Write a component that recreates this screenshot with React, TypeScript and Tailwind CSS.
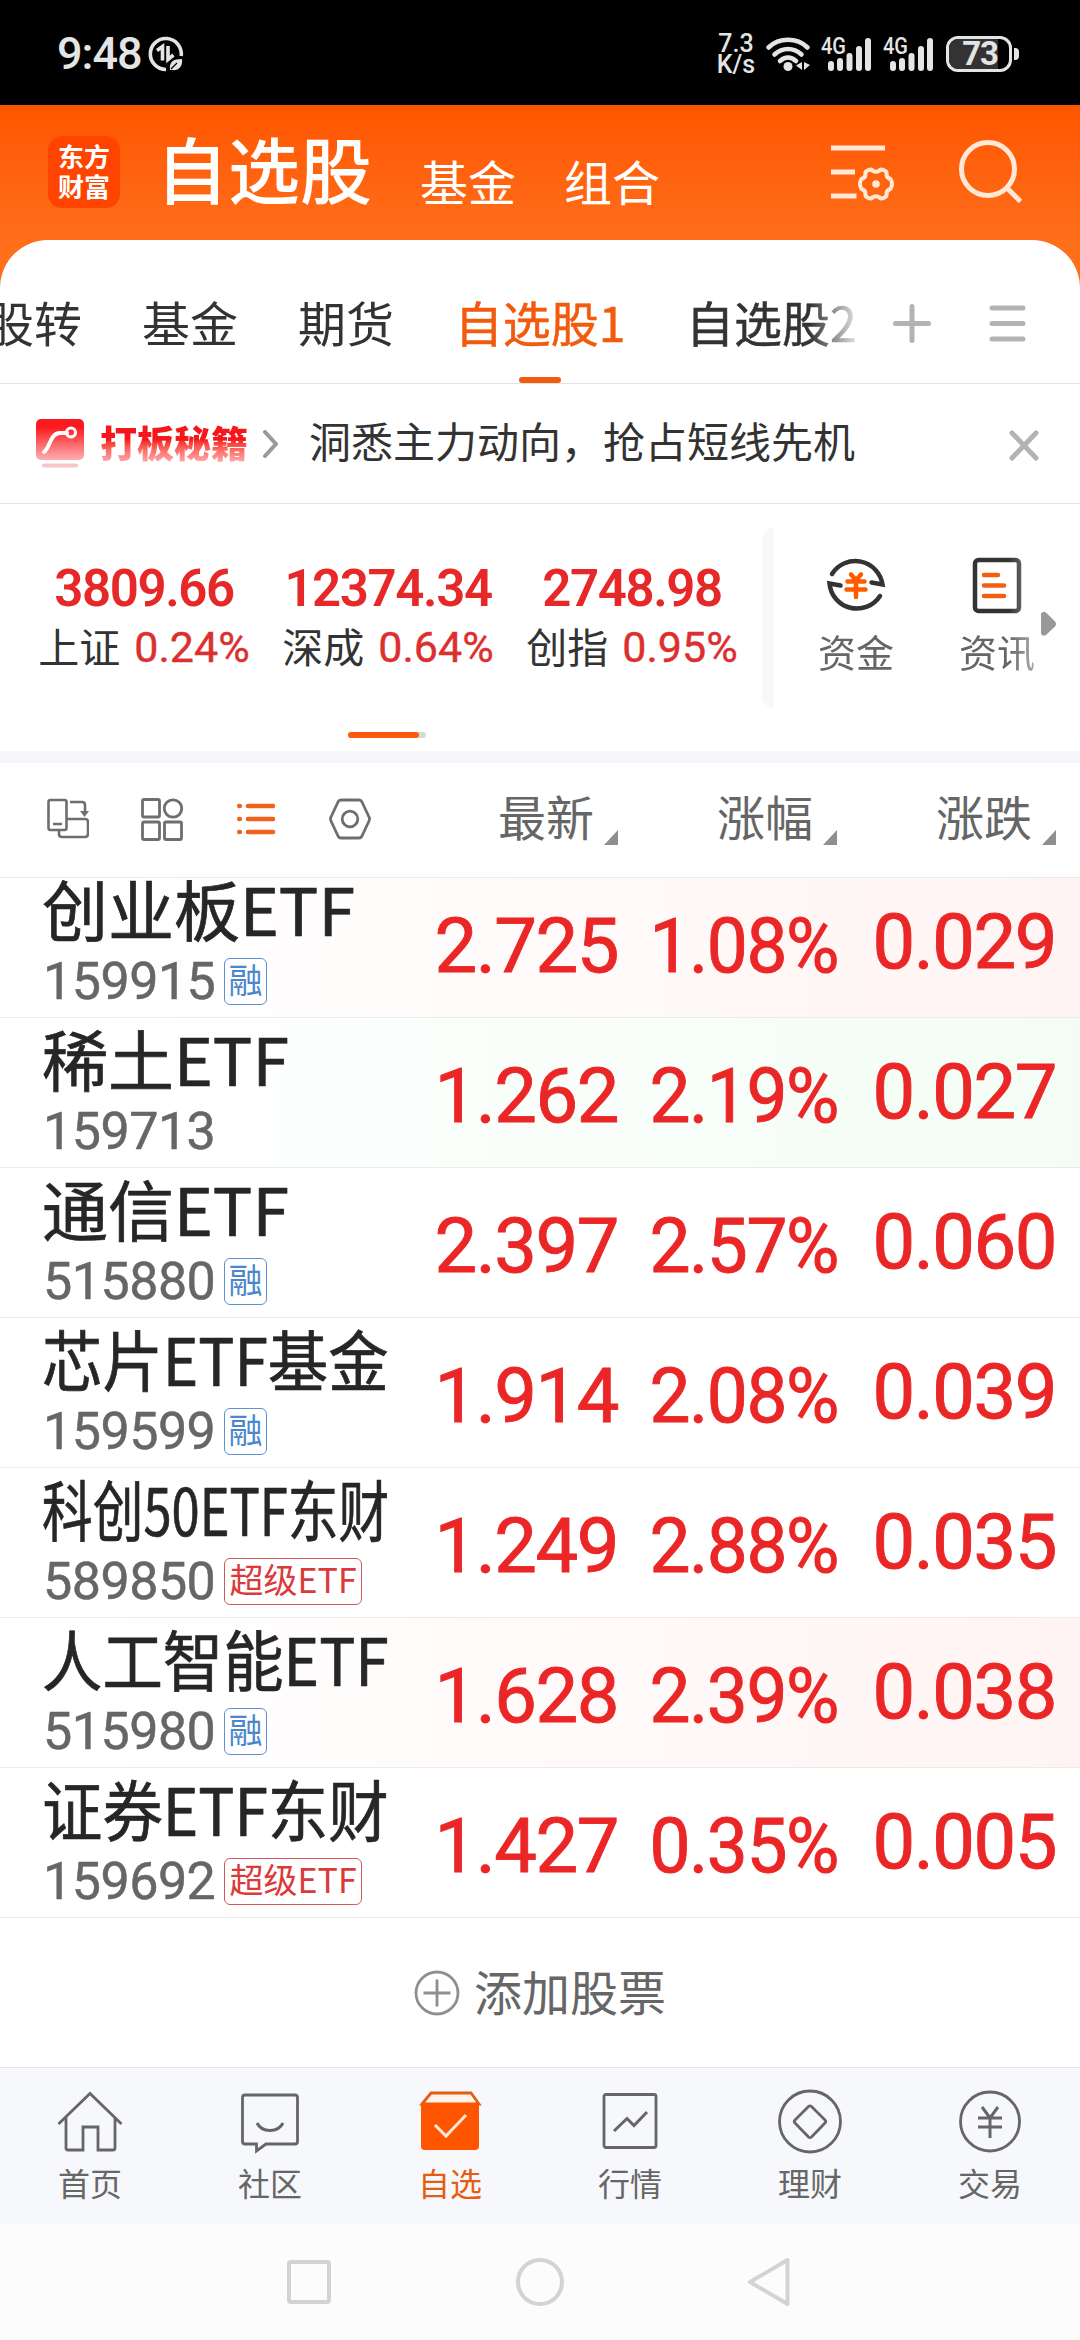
import type { ReactNode } from "react";
import { clsx } from "clsx";

type Quote = {
  name: string;
  nameScale?: string;
  code: string;
  tag?: "融" | "超级ETF";
  price: string;
  percent: string;
  change: string;
  flash?: "up" | "down";
};

const quotes: Quote[] = [
  { name: "创业板ETF", code: "159915", tag: "融", price: "2.725", percent: "1.08%", change: "0.029", flash: "up" },
  { name: "稀土ETF", code: "159713", price: "1.262", percent: "2.19%", change: "0.027", flash: "down" },
  { name: "通信ETF", code: "515880", tag: "融", price: "2.397", percent: "2.57%", change: "0.060" },
  { name: "芯片ETF基金", nameScale: "scale-x-[0.915]", code: "159599", tag: "融", price: "1.914", percent: "2.08%", change: "0.039" },
  { name: "科创50ETF东财", nameScale: "scale-x-[0.768]", code: "589850", tag: "超级ETF", price: "1.249", percent: "2.88%", change: "0.035" },
  { name: "人工智能ETF", nameScale: "scale-x-[0.915]", code: "515980", tag: "融", price: "1.628", percent: "2.39%", change: "0.038", flash: "up" },
  { name: "证券ETF东财", nameScale: "scale-x-[0.915]", code: "159692", tag: "超级ETF", price: "1.427", percent: "0.35%", change: "0.005" },
];

const indices = [
  { name: "上证", value: "3809.66", percent: "0.24%" },
  { name: "深成", value: "12374.34", percent: "0.64%" },
  { name: "创指", value: "2748.98", percent: "0.95%" },
];

const columns = ["最新", "涨幅", "涨跌"];

function Signal() {
  return (
    <svg width="52" height="36" viewBox="0 0 52 36" className="shrink-0 overflow-visible">
      <text x="0" y="18" fontSize="23" fontWeight="500" fill="#e4e4e4" textLength="25" lengthAdjust="spacingAndGlyphs">
        4G
      </text>
      <g stroke="#e4e4e4" strokeWidth="6" strokeLinecap="round">
        <path d="M10 28v4M19 25v7M28.5 20v12M38 13v19M47 5v27" />
      </g>
    </svg>
  );
}

function StatusBar() {
  return (
    <div className="flex h-[105px] items-center bg-black pt-0.5 pl-[57px] font-[Roboto,sans-serif] text-[#e4e4e4]">
      <span className="w-[91px] text-[45px] leading-none font-medium tracking-[-1px]">9:48</span>
      <svg width="36" height="36" viewBox="0 0 36 36" fill="none" stroke="#e4e4e4">
        <path d="M18 33.500A15.500 15.500 0 1 1 33.200 20" strokeWidth="3.600" />
        <path d="M9 14.500l5.500-4v14" strokeWidth="3.600" />
        <path d="M20 10v13.500l5.500-4.500" strokeWidth="3.600" />
        <path d="M22 34c-1-8 3-11 12-11 1 8-4 12-10 11z" fill="#e4e4e4" stroke="none" />
        <path d="M23 33l6-6" stroke="#000" strokeWidth="1.300" />
      </svg>
      <div className="ml-[534px] flex w-[36px] flex-col items-center text-[25px] leading-[21px] font-medium">
        <span>7.3</span>
        <span>K/s</span>
      </div>
      <svg width="46" height="36" viewBox="0 0 46 36" className="ml-[11px]" fill="none" stroke="#e4e4e4" strokeWidth="4.600" strokeLinecap="round">
        <path d="M3.500 11.500C14 1.200 32 1.200 42.500 11.500" />
        <path d="M9.500 18.500c8-7.400 19-7.400 27 0" />
        <path d="M15 25c5-4.600 11-4.600 16 0" />
        <circle cx="23" cy="30.500" r="4.500" fill="#e4e4e4" stroke="none" />
        <path d="M37 26v8l-6-4.500zM39 26v8l6-5z" fill="#e4e4e4" stroke="none" />
      </svg>
      <div className="ml-[10px] flex gap-[10px]">
        <Signal />
        <Signal />
      </div>
      <div className="ml-[11px] flex h-9 w-[66px] rounded-[12px] border-[3px] border-[#e4e4e4]">
        <div className="flex w-[49px] items-center justify-end rounded-l-[9px] bg-[#333] text-[33px] leading-none font-bold tracking-[-1px]">
          73
        </div>
      </div>
      <div className="ml-0.5 h-3 w-[5px] rounded-r-[4px] bg-[#e4e4e4]" />
    </div>
  );
}

function Header() {
  return (
    <header className="flex h-[135px] items-start bg-linear-to-b from-[#ff5500] to-[#ff6e19] pl-12 text-white">
      <div className="mt-[31px] flex size-[72px] flex-col items-center rounded-[14px] bg-[#ff4400] pt-[5px] text-[26px] leading-[30px] font-bold">
        <span>东方</span>
        <span>财富</span>
      </div>
      <h1 className="mt-[26px] ml-9 text-[72px] leading-none font-medium">自选股</h1>
      <span className="mt-[51px] ml-12 text-[48px] leading-none">基金</span>
      <span className="mt-[51px] ml-12 text-[48px] leading-none">组合</span>
      <svg width="66" height="62" viewBox="0 0 66 62" className="mt-[38px] ml-[171px]" fill="none" stroke="#ffe8d6" strokeWidth="5">
        <path d="M0 5h54M0 29h24M0 53h25.500" />
        <path
          d="M36.500 27.500Q40.500 25.500 41.500 27.500Q45 30 48.500 27.500Q49.500 25.500 53.500 27.500Q56 28.500 55.500 31Q55.500 35 59.500 36Q61 38.500 61 41Q61 43.500 59.500 46Q55.500 47 55.500 51Q56 53.500 53.500 54.500Q49.500 56.500 48.500 54.500Q45 52 41.500 54.500Q40.500 56.500 36.500 54.500Q34 53.500 34.500 51Q34.500 47 30.500 46Q29 43.500 29 41Q29 38.500 30.500 36Q34.500 35 34.500 31Q34 28.500 36.500 27.500z"
          strokeWidth="4"
          strokeLinejoin="round"
        />
        <circle cx="45" cy="41" r="3.800" fill="#ffe8d6" stroke="none" />
      </svg>
      <svg width="66" height="66" viewBox="0 0 66 66" className="mt-[34px] ml-[61px]" fill="none" stroke="#ffe8d6" strokeWidth="5">
        <circle cx="30" cy="30" r="26.500" />
        <path d="M48 48l14.500 14.500" />
      </svg>
    </header>
  );
}

function GroupTabs() {
  return (
    <div className="flex h-36 border-b border-[#e4e4e4]">
      <div className="flex w-[860px] gap-[60px] overflow-hidden [mask-image:linear-gradient(to_right,#000_810px,transparent_864px)] pt-[57px] text-[48px] leading-none whitespace-nowrap text-[#333]">
        <span className="-ml-[14px]">股转</span>
        <span>基金</span>
        <span>期货</span>
        <span className="flex w-[172px] flex-col items-center text-[#f25a0d] [-webkit-text-stroke:0.5px]">
          自选股1
          <i className="mt-auto h-1.5 w-[42px] rounded-full bg-[#f25a0d]" />
        </span>
        <span className="[-webkit-text-stroke:0.5px]">自选股2</span>
      </div>
      <svg width="176" height="44" viewBox="0 0 176 44" className="mt-[61px] ml-[29px]" stroke="#b3b3b3" strokeWidth="5" strokeLinecap="round">
        <path d="M6.500 22.500h33M23 5.500v34M103 7h31M103 22.500h31M103 38h31" />
      </svg>
    </div>
  );
}

function PromoBanner() {
  return (
    <div className="flex h-[120px] items-center border-b border-[#e4e4e4] pl-9">
      <svg width="48" height="50" viewBox="0 0 48 50" fill="none">
        <defs>
          <linearGradient id="promo" x1="0" y1="0" x2="0" y2="1">
            <stop offset="0.2" stopColor="#fb1a1e" />
            <stop offset="1" stopColor="#fdaeb2" />
          </linearGradient>
        </defs>
        <rect width="48" height="41" rx="5" fill="url(#promo)" />
        <path d="M8 33c6-4 6-19 16-19h7" stroke="#fff" strokeWidth="4" strokeLinecap="round" />
        <circle cx="35" cy="13.500" r="4.500" stroke="#fff" strokeWidth="3" />
        <rect x="6" y="44.500" width="36" height="4" rx="2" fill="#f8c6c8" />
      </svg>
      <span className="-mt-1 ml-4 bg-linear-to-b from-[#f5171c] from-45% to-[#ffa5a8] to-95% bg-clip-text text-[37px] leading-[44px] font-black text-transparent">
        打板秘籍
      </span>
      <svg width="16" height="28" viewBox="0 0 16 28" className="ml-[15px]" fill="none" stroke="#999" strokeWidth="4">
        <path d="M2 2l11 12-11 12" strokeLinecap="round" strokeLinejoin="round" />
      </svg>
      <span className="-mt-2 ml-[30px] text-[42px] leading-none text-[#333]">洞悉主力动向，抢占短线先机</span>
      <svg width="32" height="32" viewBox="0 0 32 32" className="mt-0.5 ml-[153px]" stroke="#b3b3b3" strokeWidth="5" strokeLinecap="round">
        <path d="M4 4l24 25M28 4L4 29" />
      </svg>
    </div>
  );
}

function IndexBoard() {
  return (
    <section className="flex h-[259px] border-b-[12px] border-[#f6f7fb]">
      <div className="flex w-[762px] flex-col pl-[22px]">
        <div className="flex pt-[60px]">
          {indices.map((item) => (
            <div key={item.name} className="flex w-[244px] flex-col items-center whitespace-nowrap">
              <span className="font-[Roboto,sans-serif] text-[51px] leading-[50px] font-semibold tracking-[-1.400px] text-[#e62828]">
                {item.value}
              </span>
              <span className="mt-2 flex items-center gap-3.5 leading-[50px]">
                <span className="-mt-1 text-[41px] text-[#333]">{item.name}</span>
                <span className="font-[Roboto,sans-serif] text-[43px] text-[#dc3030] [-webkit-text-stroke:0.4px]">{item.percent}</span>
              </span>
            </div>
          ))}
        </div>
        <div className="mt-[60px] ml-[326px] h-1.5 w-[78px] rounded-full bg-[#d8d8d8]">
          <div className="h-full w-[71px] rounded-full bg-[#fb5a0c]" />
        </div>
      </div>
      <div className="mt-[24px] h-[180px] w-3 rounded-l-[12px] bg-[#f7f8fa]" />
      <div className="flex pt-[50px] text-[38px] leading-none text-[#666] [mask-image:linear-gradient(to_right,#000_235px,#0006_268px)]">
        <div className="ml-[44px] flex flex-col items-center">
          <svg width="62" height="62" viewBox="0 0 62 62" fill="none" stroke="#333" strokeWidth="4.500">
            <path d="M7 20A27.500 27.500 0 0 1 57.500 30.500l-11-2" strokeLinecap="round" />
            <path d="M55 42A27.500 27.500 0 0 1 4.500 29.500l11 2" strokeLinecap="round" />
            <path d="M26 20.500l5 5.500 5-5.500M22.500 27.500h17M21.500 35.500h19M31 27v16" stroke="#ff5a00" strokeLinecap="round" />
          </svg>
          <span className="mt-4">资金</span>
        </div>
        <div className="ml-[65px] flex flex-col items-center">
          <svg width="62" height="62" viewBox="0 0 62 62" fill="none" stroke="#333" strokeWidth="4.500">
            <rect x="9" y="6" width="44" height="51" rx="3.500" />
            <path d="M18 21h14M18 31.500h20M18 42h20" stroke="#f25f12" strokeLinecap="round" />
          </svg>
          <span className="mt-4">资讯</span>
        </div>
      </div>
      <svg width="16" height="26" viewBox="0 0 16 26" className="mt-[107px] ml-[6px] shrink-0">
        <path d="M0 2.500Q2-.5 5 1.500L14 10.500Q16 13 14 15.500L5 24Q2 26 0 23z" fill="#999" />
      </svg>
    </section>
  );
}

function ListToolbar() {
  return (
    <div className="flex h-[115px] items-center border-b border-[#ebebeb] pb-0.5 pl-[47px]">
      <svg width="42" height="42" viewBox="0 0 42 42" fill="none" stroke="#6e6e6e" strokeWidth="2.600">
        <rect x="1.500" y="2" width="18" height="30" rx="2" />
        <path d="M6 26h9M12 32v4q0 3 3 3h23q3 0 3-3V24q0-3-3-3H20M23 4h12q3 0 3 3v9" />
        <path d="M33 13h9l-4.500 6z" fill="#6e6e6e" stroke="none" />
      </svg>
      <svg width="42" height="43" viewBox="0 0 42 43" className="ml-[52px]" fill="none" stroke="#6e6e6e" strokeWidth="2.800">
        <rect x="1.500" y="1.500" width="17" height="17.500" rx="1.500" />
        <circle cx="32" cy="10.500" r="8.700" />
        <rect x="1.500" y="24" width="17" height="17.500" rx="1.500" />
        <rect x="23.500" y="24" width="17" height="17.500" rx="1.500" />
      </svg>
      <svg width="40" height="34" viewBox="0 0 40 34" className="ml-[53px]" stroke="#f0611a" strokeWidth="4.600" strokeLinecap="round">
        <path d="M3.300 4h.5M12 4h25M3.300 17h.5M12 17h25M3.300 30h.5M12 30h25" />
      </svg>
      <svg width="42" height="42" viewBox="0 0 42 42" className="ml-[53px]" fill="none" stroke="#6e6e6e" strokeWidth="2.800">
        <path d="M12 2h18q2 0 3 2l7 15q1 2 0 4l-7 15q-1 2-3 2H12q-2 0-3-2L2 23q-1-2 0-4L9 4q1-2 3-2z" />
        <circle cx="21" cy="21" r="7.800" />
      </svg>
      <div className="mb-1 ml-[28px] flex">
        {columns.map((label) => (
          <div key={label} className="flex w-[219px] items-end justify-end gap-2.5">
            <span className="mb-[5px] text-[48px] leading-[50px] text-[#666]">{label}</span>
            <svg width="14" height="15" viewBox="0 0 14 15">
              <path d="M14 0v15H0z" fill="#8e8e93" />
            </svg>
          </div>
        ))}
      </div>
    </div>
  );
}

function QuoteRow({ quote }: { quote: Quote }) {
  return (
    <div
      className={clsx(
        "flex h-[150px] shrink-0 border-b border-[#ebebeb] pl-[42px] whitespace-nowrap",
        quote.flash === "up" && "bg-linear-to-r from-white from-10% to-[#fff4f3]",
        quote.flash === "down" && "bg-linear-to-r from-white from-10% to-[#f3fdf5]",
      )}
    >
      <div className="w-[350px]">
        <div
          className={clsx(
            "mt-[6px] w-max origin-left text-[66px] leading-[66px] text-[#262626] [-webkit-text-stroke:0.7px]",
            quote.nameScale,
          )}
        >
          {quote.name}
        </div>
        <div className="mt-[18px] flex items-center">
          <span className="w-[182px] pl-px font-[Roboto,sans-serif] text-[52px] leading-[47px] tracking-[-0.5px] text-[#666] [-webkit-text-stroke:0.5px]">
            {quote.code}
          </span>
          {quote.tag && (
            <span
              className={clsx(
                "h-[47px] rounded-[6px] border text-[34px] leading-[40px]",
                quote.tag === "融" ? "border-[#5b92d0] px-[3.500px] text-[#4a87cc]" : "border-[#d05a5a] px-[4.500px] text-[#dc3a3a]",
              )}
            >
              {quote.tag}
            </span>
          )}
        </div>
      </div>
      <div className="flex font-[Roboto,sans-serif] text-[76px] leading-[76px] tracking-[-1.500px] text-[#eb2626] [-webkit-text-stroke:0.9px]">
        <span className="mt-10 w-[226px] text-right">{quote.price}</span>
        <span className="mt-10 flex w-[220px] origin-right scale-x-[0.96] justify-end">{quote.percent}</span>
        <span className="mt-9 w-[218px] text-right">{quote.change}</span>
      </div>
    </div>
  );
}

function NavItem({ label, active, children }: { label: string; active?: boolean; children: ReactNode }) {
  return (
    <div className={clsx("flex w-[180px] flex-col items-center pt-5", active ? "text-[#e55c14]" : "text-[#666]")}>
      <svg width="66" height="66" viewBox="0 0 66 66" fill="none" stroke="currentColor" strokeWidth="2.800">
        {children}
      </svg>
      <span className="mt-[12px] text-[32px] leading-none">{label}</span>
    </div>
  );
}

function BottomNav() {
  return (
    <nav className="flex h-[157px] border-t border-[#e4e4e4] bg-[#f7f8fb]">
      <NavItem label="首页">
        <path d="M1.500 36L33 5.500 64.500 36M9 29.500V60q0 2 2 2h15V39h15v23h15q2 0 2-2V29.500" />
      </NavItem>
      <NavItem label="社区">
        <path d="M8 7h50q2.500 0 2.500 2.500v44q0 2.500-2.500 2.500H29l-9.500 7v-7H8q-2.500 0-2.500-2.500v-44Q5.500 7 8 7z" />
        <path d="M20 35c5 10 21 10 26 0" strokeWidth="3" />
      </NavItem>
      <NavItem label="自选" active>
        <path d="M5 16L14 5h40l8 11z" fill="#fff3ea" />
        <path d="M4 15h58v43q0 4-4 4H8q-4 0-4-4z" fill="#ff5500" stroke="none" />
        <path d="M18 37l11 11 20-21" stroke="#ffe9dc" strokeWidth="3" />
      </NavItem>
      <NavItem label="行情">
        <rect x="7" y="6.500" width="52" height="53" rx="2" />
        <path d="M17 43l13-12.500 7 7L50 24" strokeWidth="3" />
      </NavItem>
      <NavItem label="理财">
        <circle cx="33" cy="33.500" r="30.500" />
        <path d="M31.500 18.500q1.500-1.300 3 0L48 32q1.500 1.500 0 3L34.500 49q-1.500 1.300-3 0L18 35q-1.500-1.500 0-3z" />
      </NavItem>
      <NavItem label="交易">
        <circle cx="33" cy="33.500" r="29.500" />
        <path d="M25 19l8 11 8-11M21 30h24M21 39h24M33 30v20" strokeWidth="3" />
      </NavItem>
    </nav>
  );
}

export default function App() {
  return (
    <div className="flex h-[2340px] w-[1080px] flex-col overflow-hidden bg-white font-['Noto_Sans_CJK_SC',sans-serif]">
      <StatusBar />
      <Header />
      <div className="bg-[#ff6e19]">
        <div className="rounded-t-[48px] bg-white">
          <GroupTabs />
          <PromoBanner />
          <IndexBoard />
          <ListToolbar />
        </div>
      </div>
      {/* list is scrolled by a few pixels, so the first row sits partly under the toolbar */}
      <div className="flex h-[1040px] flex-col justify-end overflow-hidden">
        {quotes.map((quote) => (
          <QuoteRow key={quote.code} quote={quote} />
        ))}
      </div>
      <div className="flex flex-1 items-center justify-center gap-[14px]">
        <svg width="46" height="46" viewBox="0 0 46 46" fill="none" stroke="#8e8e93" strokeWidth="2.800">
          <circle cx="23" cy="23" r="21" />
          <path d="M9.500 23h27M23 9.500v27" />
        </svg>
        <span className="-mt-1.5 text-[48px] leading-none text-[#666]">添加股票</span>
      </div>
      <BottomNav />
      <div className="flex h-[116px] items-center bg-[#fcfcfc] pl-[287px]">
        <div className="size-11 rounded-[4px] border-4 border-[#d3d3d3]" />
        <div className="ml-[185px] size-12 rounded-full border-4 border-[#d3d3d3]" />
        <svg width="44" height="50" viewBox="0 0 44 50" className="ml-[183px]" fill="none" stroke="#d3d3d3" strokeWidth="4" strokeLinejoin="round">
          <path d="M40.500 3v44L3 25z" />
        </svg>
      </div>
    </div>
  );
}
